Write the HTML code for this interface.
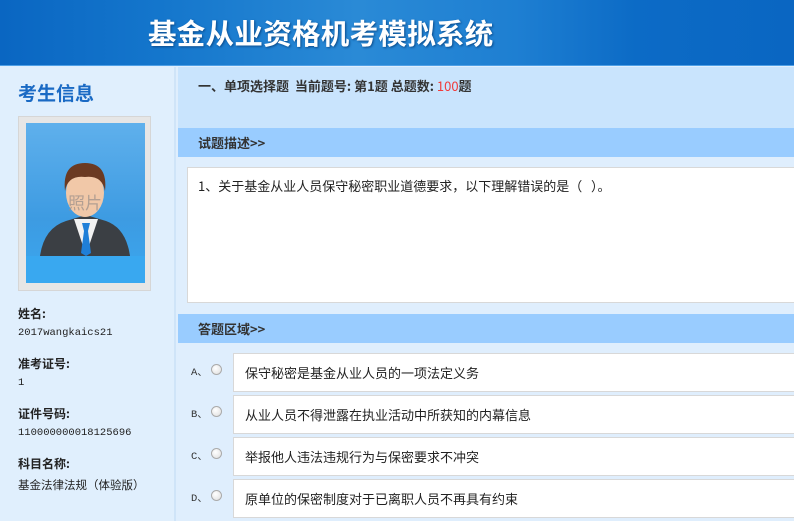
<!DOCTYPE html>
<html><head><meta charset="utf-8"><style>
*{margin:0;padding:0;box-sizing:border-box}
body{width:794px;height:521px;overflow:hidden;background:#dfeefd;font-family:"Liberation Sans","SimSun","Noto Sans CJK SC",sans-serif;position:relative}
.hdr{position:absolute;left:0;top:0;width:794px;height:66px;background:linear-gradient(90deg,#0a66c2 0%,#1476cc 20%,#2a8ad6 45%,#1e7fd2 65%,#0c6bc6 80%,#0a66c2 100%);border-bottom:1px solid #4fa0e6}
.hdr .t{position:absolute;left:148px;top:12px;font-size:28.5px;font-weight:bold;color:#fff;letter-spacing:0.3px;font-family:"Noto Sans CJK SC",sans-serif;text-shadow:1px 1px 2px #0a4a8a}
.side{position:absolute;left:0;top:67px;width:176px;height:454px;background:#e0effd;border-right:2px solid #cfe4f8}
.side h2{position:absolute;left:18px;top:12px;font-size:19px;color:#1a6ac4;font-family:"Noto Sans CJK SC",sans-serif;font-weight:bold}
.photo{position:absolute;left:18px;top:49px;width:133px;height:175px;background:#e6e6e6;border:1px solid #d6d6d6}
.photo .in{position:absolute;left:7px;top:6px;width:119px;height:160px;background:linear-gradient(180deg,#5fb0ec,#3d9be2 60%,#3aa7ef)}
.lab{position:absolute;left:18px;font-size:12px;font-weight:bold;color:#222;font-family:"Noto Sans CJK SC",sans-serif}
.val{position:absolute;left:18px;font-size:10.5px;color:#222;font-family:"Liberation Mono",monospace}
.main{position:absolute;left:178px;top:67px;width:616px;height:454px;background:#dfeefd}
.top{position:absolute;left:0;top:0;width:616px;height:61px;background:#c9e4fd}
.top span{position:absolute;left:20px;top:9px;font-size:13px;font-weight:bold;color:#333;font-family:"Noto Sans CJK SC",sans-serif}
.bar{position:absolute;left:0;width:616px;height:29px;background:#99ccff}
.bar span{position:absolute;left:20px;top:5px;font-size:13px;font-weight:bold;color:#333;font-family:"Noto Sans CJK SC",sans-serif}
.q{position:absolute;left:9px;top:100px;width:607px;height:136px;background:#fff;border:1px solid #d8d8d8;border-right:none}
.q span{position:absolute;left:10px;top:8px;font-size:13px;color:#222;font-family:"Noto Sans CJK SC",sans-serif}
.opt{position:absolute;left:55px;width:561px;height:39px;background:#fff;border:1px solid #d8d8d8;border-right:none}
.opt span{position:absolute;left:11px;top:9px;font-size:13px;color:#222;font-family:"Noto Sans CJK SC",sans-serif}
.ol{position:absolute;left:13px;font-size:10.5px;color:#333;font-family:"Liberation Mono",monospace}
.rd{position:absolute;left:33px;width:11px;height:11px;border-radius:50%;border:1px solid #aaa;background:radial-gradient(circle at 40% 35%,#fff,#ddd)}
</style></head><body>
<div class="hdr"><div class="t">基金从业资格机考模拟系统</div></div>
<div class="side">
<h2>考生信息</h2>
<div class="photo"><div class="in">
<svg width="119" height="160" viewBox="0 0 119 160">
<rect x="0" y="133" width="119" height="27" fill="#39a8f0"/>
<path d="M14 133 Q18 105 40 98 L60 92 L80 98 Q100 105 104 133Z" fill="#3b3f44"/>
<path d="M48 96 L60 132 L72 96Z" fill="#f2f2f2"/>
<path d="M56 100 L64 100 L62 108 L65 130 L60 133 L55 130 L58 108Z" fill="#1f7fd8"/>
<ellipse cx="59" cy="70" rx="19" ry="24" fill="#f1c8a8"/>
<path d="M39 68 Q36 40 59 40 Q82 40 79 68 Q76 52 59 54 Q42 52 39 68Z" fill="#6b3a22"/>
<text x="42" y="86" font-size="17" fill="#9a8f8a" opacity="0.7" font-family="Noto Sans CJK SC">照片</text>
</svg></div></div>
<div class="lab" style="top:238px">姓名:</div>
<div class="val" style="top:260px">2017wangkaics21</div>
<div class="lab" style="top:288px">准考证号:</div>
<div class="val" style="top:310px">1</div>
<div class="lab" style="top:338px">证件号码:</div>
<div class="val" style="top:360px">110000000018125696</div>
<div class="lab" style="top:388px">科目名称:</div>
<div class="lab" style="top:410px;font-weight:normal;font-size:11.5px">基金法律法规（体验版）</div>
</div>
<div class="main">
<div class="top"><span>一、单项选择题&nbsp;&nbsp;当前题号: 第1题 总题数: <b style="color:#f03c3c;font-weight:normal">100</b>题</span></div>
<div class="bar" style="top:61px"><span>试题描述&gt;&gt;</span></div>
<div class="q"><span>1、关于基金从业人员保守秘密职业道德要求，以下理解错误的是（&nbsp;&nbsp;&nbsp;）。</span></div>
<div class="bar" style="top:247px"><span>答题区域&gt;&gt;</span></div>
<div class="ol" style="top:297px">A、</div><div class="rd" style="top:297px"></div>
<div class="opt" style="top:286px"><span>保守秘密是基金从业人员的一项法定义务</span></div>
<div class="ol" style="top:339px">B、</div><div class="rd" style="top:339px"></div>
<div class="opt" style="top:328px"><span>从业人员不得泄露在执业活动中所获知的内幕信息</span></div>
<div class="ol" style="top:381px">C、</div><div class="rd" style="top:381px"></div>
<div class="opt" style="top:370px"><span>举报他人违法违规行为与保密要求不冲突</span></div>
<div class="ol" style="top:423px">D、</div><div class="rd" style="top:423px"></div>
<div class="opt" style="top:412px"><span>原单位的保密制度对于已离职人员不再具有约束</span></div>
</div>
</body></html>
